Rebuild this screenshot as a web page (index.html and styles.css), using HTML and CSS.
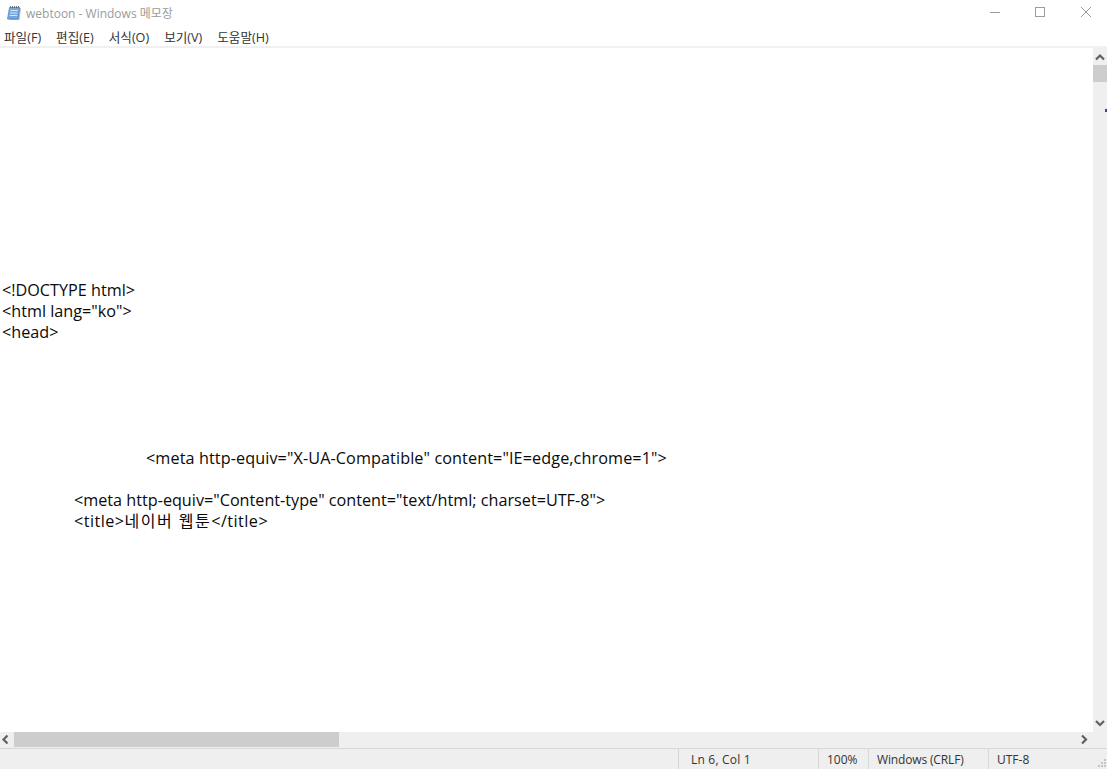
FILE: index.html
```html
<!DOCTYPE html>
<html lang="ko">
<head>
<meta charset="utf-8">
<title>webtoon - Windows 메모장</title>
<link rel="stylesheet" href="styles.css">
</head>
<body>
<div class="window">
  <header class="titlebar">
    <svg class="app-icon" viewBox="0 0 16 16" width="16" height="16">
      <path d="M4.500 3h10.500l-1.500 12H3z" fill="#b9b9b9"/>
      <path d="M3.500 2.500h10l-1.500 11.500H1.500z" fill="#6fa8e4" stroke="#4a7fbe" stroke-width=".7"/>
      <path d="M4.500 5.500h7.500M4 8h7.500M3.700 10.500h7.500" stroke="#d4e7fa" stroke-width="1"/>
      <path d="M4.500 1v2M6.500 1v2M8.500 1v2M10.500 1v2M12.500 1v2" stroke="#6a6a6a" stroke-width=".9"/>
    </svg>
    <span class="title">webtoon - Windows 메모장</span>
    <div class="controls">
      <svg class="ctl" viewBox="0 0 46 24"><path d="M21 12.500h10" stroke="#a3989f" fill="none"/></svg>
      <svg class="ctl" viewBox="0 0 46 24"><rect x="20.500" y="7.500" width="9" height="9" stroke="#a3989f" fill="none"/></svg>
      <svg class="ctl" viewBox="0 0 46 24"><path d="M20 7l10 10M30 7L20 17" stroke="#a3989f" fill="none"/></svg>
    </div>
  </header>
  <nav class="menubar">
    <span>파일(F)</span><span>편집(E)</span><span>서식(O)</span><span>보기(V)</span><span>도움말(H)</span>
  </nav>
  <div class="editor">
    <main class="text"><pre class="code">











&lt;!DOCTYPE html&gt;
&lt;html lang="ko"&gt;
&lt;head&gt;





<span class="ind2 wide">&lt;meta http-equiv="X-UA-Compatible" content="IE=edge,chrome=1"&gt;</span>

<span class="ind1">&lt;meta http-equiv="Content-type" content="text/html; charset=UTF-8"&gt;</span>
<span class="ind1 tag">&lt;title&gt;<span class="hangul">네이버 웹툰</span>&lt;/title&gt;</span></pre></main>
    <aside class="vscroll">
      <svg class="arrow" viewBox="0 0 14 17"><path d="M3 11.500l4-4 4 4" fill="none" stroke="#606060" stroke-width="2.200"/></svg>
      <div class="vthumb"></div>
      <div class="vtrack"></div>
      <svg class="arrow" viewBox="0 0 14 17"><path d="M3 6l4 4 4-4" fill="none" stroke="#606060" stroke-width="2.200"/></svg>
      <span class="blip"></span>
    </aside>
  </div>
  <div class="hscroll">
    <svg class="harrow" viewBox="0 0 14 16"><path d="M7.500 3.500l-4 4 4 4" fill="none" stroke="#606060" stroke-width="2.200"/></svg>
    <div class="hthumb"></div>
    <div class="htrack"></div>
    <svg class="harrow" viewBox="0 0 14 16"><path d="M5 3.500l4 4-4 4" fill="none" stroke="#606060" stroke-width="2.200"/></svg>
    <div class="corner"></div>
  </div>
  <footer class="statusbar">
    <div class="cell pos">Ln 6, Col 1</div>
    <div class="cell zoom">100%</div>
    <div class="cell eol">Windows (CRLF)</div>
    <div class="cell enc">UTF-8</div>
    <svg class="grip" viewBox="0 0 12 12" width="12" height="12"><path d="M9 2h2v2H9zM6 5h2v2H6zM9 5h2v2H9zM3 8h2v2H3zM6 8h2v2H6zM9 8h2v2H9z" fill="#c4c4c4"/></svg>
  </footer>
</div>
</body>
</html>
```
FILE: styles.css
```css
* { box-sizing: border-box; }
html, body { margin: 0; height: 100%; overflow: hidden; background: #fff; }
body { font-family: "Noto Sans CJK KR", "Noto Sans", sans-serif; }
.window { width: 1107px; height: 769px; display: flex; flex-direction: column; }
.titlebar { height: 26px; display: flex; align-items: center; padding-left: 6px; flex: none; }
.app-icon { flex: none; margin-right: 4px; }
.title { font-family: "Open Sans", "Noto Sans CJK KR", sans-serif; font-size: 12px; color: #9b9b9b; }
.controls { margin-left: auto; display: flex; align-self: flex-start; }
.ctl { width: 46px; height: 24px; display: block; }
.menubar { height: 20px; display: flex; flex: none; gap: 15px; padding: 1px 0 0 4px; align-items: center; font-family: "Open Sans", "Noto Sans CJK KR", sans-serif; font-size: 12.600px; color: #333; }
.editor { flex: 1; min-height: 0; display: flex; border-top: 2px solid #f0f0f0; }
.text { flex: 1; min-width: 0; overflow: hidden; padding-top: 1px; }
.code { margin: 0; padding-left: 2px; font-family: "Open Sans", "Noto Sans CJK KR", sans-serif; font-size: 16.200px; line-height: 21px; color: #0a0a0a; white-space: pre; }
.wide { letter-spacing: .1px; }
.tag { letter-spacing: .45px; }
.hangul { font-size: 16px; letter-spacing: 1.500px; line-height: 1; }
.ind1 { padding-left: 72px; }
.ind2 { padding-left: 144px; }
.vscroll { width: 14px; background: #efefef; display: flex; flex-direction: column; flex: none; position: relative; }
.arrow { width: 14px; height: 17px; flex: none; display: block; }
.vthumb { height: 17px; background: #cdcdcd; flex: none; }
.vtrack { flex: 1; }
.blip { position: absolute; right: 0; top: 61px; width: 2px; height: 3px; background: #33478a; }
.hscroll { height: 16px; flex: none; display: flex; background: #efefef; }
.harrow { width: 14px; height: 16px; display: block; flex: none; }
.hthumb { width: 325px; background: #cdcdcd; height: 15px; flex: none; }
.htrack { flex: 1; }
.corner { width: 16px; flex: none; }
.statusbar { height: 21px; flex: none; display: flex; background: #efefef; border-top: 1px solid #d7d7d7; font-family: "Open Sans", "Noto Sans CJK KR", sans-serif; font-size: 12px; color: #333; padding-left: 678px; position: relative; }
.cell { border-left: 1px solid #d7d7d7; display: flex; align-items: center; padding-left: 12px; }
.pos { width: 140px; letter-spacing: .2px; }
.zoom { width: 50px; padding-left: 8px; }
.eol { width: 120px; padding-left: 8px; letter-spacing: -.15px; }
.enc { padding-left: 8px; flex: 1; }
.grip { position: absolute; right: 0; bottom: 0; }
```
